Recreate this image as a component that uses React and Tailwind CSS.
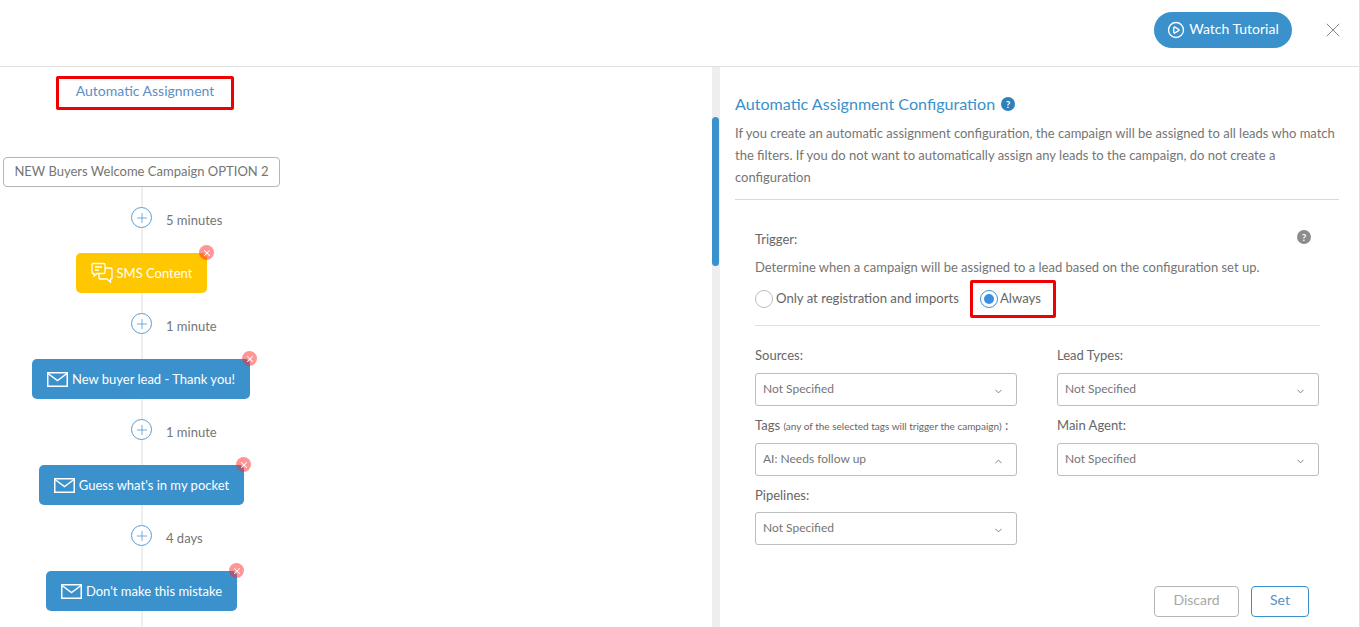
import React from 'react';
import { ChevronDown, ChevronUp, CirclePlay, Plus, X } from 'lucide-react';

const steps = [
  { delay: '5 minutes', label: 'SMS Content', kind: 'sms', width: 'w-[131px]' },
  { delay: '1 minute', label: 'New buyer lead - Thank you!', kind: 'mail', width: 'w-[218px] mr-px' },
  { delay: '1 minute', label: "Guess what's in my pocket", kind: 'mail', width: 'w-[205px]' },
  { delay: '4 days', label: "Don't make this mistake", kind: 'mail', width: 'w-[191px]' },
];

const MailIcon = () => (
  <svg width="21" height="15" viewBox="0 0 21 15" fill="none" stroke="currentColor" strokeWidth="1.5" className="shrink-0">
    <rect x="0.75" y="0.75" width="19.5" height="13.5" />
    <path d="M1 1.5l9.5 7 9.5-7" />
  </svg>
);

const SmsIcon = () => (
  <svg width="22" height="22" viewBox="0 0 22 22" fill="none" stroke="currentColor" strokeWidth="1.3" className="shrink-0">
    <path d="M1 2.500a1 1 0 0 1 1-1h11a1 1 0 0 1 1 1v8a1 1 0 0 1-1 1H6l-3 2.500v-2.500H2a1 1 0 0 1-1-1z" />
    <path d="M14 6h6a1 1 0 0 1 1 1v9a1 1 0 0 1-1 1h-.5v3L16 17H9a1 1 0 0 1-1-1v-4.500" />
    <path d="M4 5h7M4 8h4" />
  </svg>
);

const Connector = ({ delay }) => (
  <div className="relative flex h-[60px] w-full justify-center">
    <div className="w-0.5 bg-[#eeeeee]" />
    <div className="absolute left-[131px] top-[20px] flex h-[21px] w-[21px] items-center justify-center rounded-full border border-[#5b9bd0] bg-white text-[#5b9bd0]">
      <Plus size={16} strokeWidth={1.25} />
    </div>
    <span className="absolute left-[166px] top-[23px] text-[13px] leading-5 text-[#757575]">{delay}</span>
  </div>
);

const StepNode = ({ step }) => (
  <div className={`relative flex h-[40px] ${step.width} items-center justify-center gap-[4px] rounded-[5px] text-[13px] text-white ${step.kind === 'sms' ? 'bg-[#ffc700]' : 'bg-[#3b91cb]'}`}>
    {step.kind === 'sms' ? <SmsIcon /> : <MailIcon />}
    <span className="mt-[2px] whitespace-nowrap">{step.label}</span>
    <div className="absolute -right-[7px] -top-[8px] flex h-[15px] w-[15px] items-center justify-center rounded-full bg-[#ff2b2b]/50 text-white">
      <X size={10} strokeWidth={2.5} />
    </div>
  </div>
);

const Select = ({ value, open }) => (
  <div className="flex h-[33px] w-full items-center justify-between rounded-[3px] border border-[#bdbdbd] bg-white pl-[7px] pr-[12px] text-[12px] text-[#757575]">
    <span className="-mt-px">{value}</span>
    {open ? <ChevronUp size={11} className="mt-[3px]" /> : <ChevronDown size={11} className="mt-[3px]" />}
  </div>
);

const Field = ({ label, children }) => (
  <div className="flex h-[70px] flex-col">
    <div className="mb-[8px] h-[20px] text-[13px] leading-5 text-[#666666]">{label}</div>
    {children}
  </div>
);

const HelpDot = ({ color }) => (
  <span className={`flex h-[14px] w-[14px] items-center justify-center rounded-full text-[10px] font-bold leading-none text-white ${color}`}>?</span>
);

export default function App() {
  return (
    <div className="flex h-[627px] w-[1360px] flex-col overflow-hidden border-r border-[#e0e0e0] bg-white font-['Lato',sans-serif]">
      <header className="flex h-[67px] shrink-0 items-start justify-end border-b border-[#e0e0e0] pr-[14px] pt-[12px]">
        <button className="flex h-[36px] w-[138px] items-center justify-center gap-[4px] rounded-full bg-[#3b91cb] text-[14px] text-white">
          <CirclePlay size={18} strokeWidth={1.75} />
          <span className="-mt-[3px]">Watch Tutorial</span>
        </button>
        <X size={24} strokeWidth={1} className="ml-[29px] mt-[6px] text-[#8a8a8a]" />
      </header>

      <div className="flex min-h-0 flex-1">
        {/* campaign flow */}
        <div className="flex w-[720px] shrink-0 border-r border-[#eeeeee]">
          <div className="flex-1 overflow-hidden">
            <div className="ml-[56px] mt-[9px] flex h-[34px] w-[178px] items-center justify-center rounded-[2px] border-[3px] border-[#f00000] pb-[6px] text-[14px] text-[#5b8fc7]">
              Automatic Assignment
            </div>
            <div className="flex w-[283px] flex-col items-center pt-[47px]">
              <div className="flex h-[30px] w-[277px] items-center justify-center whitespace-nowrap rounded-[4px] border border-[#b5b5b5] text-[13px] text-[#757575]">
                NEW Buyers Welcome Campaign OPTION 2
              </div>
              {steps.map((step) => (
                <React.Fragment key={step.label}>
                  <div className="relative flex w-full flex-col items-center">
                    <Connector delay={step.delay} />
                    <div className="h-[6px] w-0.5 bg-[#eeeeee]" />
                  </div>
                  <StepNode step={step} />
                </React.Fragment>
              ))}
              <div className="h-[30px] w-0.5 bg-[#eeeeee]" />
            </div>
          </div>
          <div className="h-full w-[7px] bg-[#eeeeee] pt-[50px]">
            <div className="h-[149px] w-full rounded-full bg-[#3b91cb]" />
          </div>
        </div>

        {/* configuration */}
        <div className="flex-1 pl-[15px] pr-[20px] pt-[27px]">
          <div className="flex items-center gap-[6px]">
            <h2 className="text-[16.1px] leading-5 text-[#3b91cb]">Automatic Assignment Configuration</h2>
            <HelpDot color="bg-[#2f7fb8]" />
          </div>
          <p className="mt-[8px] border-b border-[#d9d9d9] pb-[11px] text-[13px] leading-[22px] text-[#757575]">
            If you create an automatic assignment configuration, the campaign will be assigned to all leads who match the filters. If you do not want to automatically assign any leads to the campaign, do not create a configuration
          </p>

          <div className="ml-[20px] mr-[19px] pt-[29px]">
            <div className="flex items-center justify-between pr-[9px] text-[13px] leading-5 text-[#666666]">
              Trigger:
              <span className="-mt-[4px]"><HelpDot color="bg-[#8c8c8c]" /></span>
            </div>
            <p className="mt-[8px] text-[13px] leading-5 text-[#757575]">
              Determine when a campaign will be assigned to a lead based on the configuration set up.
            </p>
            <div className="mt-[1px] flex h-[41px] items-center text-[13.15px] text-[#666666]">
              <span className="h-[18px] w-[18px] rounded-full border border-[#bdbdbd]" />
              <span className="ml-[3px]">Only at registration and imports</span>
              <div className="ml-[11px] flex h-[38px] w-[86px] items-center rounded-[2px] border-[3px] border-[#f00000] pl-[7px]">
                <span className="flex h-[18px] w-[18px] items-center justify-center rounded-full border border-[#3b8fe0]">
                  <span className="h-[10px] w-[10px] rounded-full bg-[#3b8fe0]" />
                </span>
                <span className="ml-[2px]">Always</span>
              </div>
            </div>
            <div className="mt-[6px] border-t border-[#e0e0e0] pt-[19px]">
              <div className="grid grid-cols-[262px_262px] gap-x-[40px]">
                <Field label="Sources:"><Select value="Not Specified" /></Field>
                <Field label="Lead Types:"><Select value="Not Specified" /></Field>
                <Field label={<>Tags <span className="text-[10px]">(any of the selected tags will trigger the campaign)</span> :</>}>
                  <Select value="AI: Needs follow up" open />
                </Field>
                <Field label="Main Agent:"><Select value="Not Specified" /></Field>
                <Field label="Pipelines:"><div className="-mt-px"><Select value="Not Specified" /></div></Field>
              </div>
              <div className="mt-[31px] flex justify-end gap-[12px] pr-[11px]">
                <button className="h-[31px] w-[85px] rounded-[4px] border border-[#b5b5b5] pb-[4px] text-[14px] text-[#a8a8a8]">Discard</button>
                <button className="h-[31px] w-[58px] rounded-[4px] border border-[#3b91cb] pb-[4px] text-[14px] text-[#5b8fc7]">Set</button>
              </div>
            </div>
          </div>
        </div>
      </div>
    </div>
  );
}
